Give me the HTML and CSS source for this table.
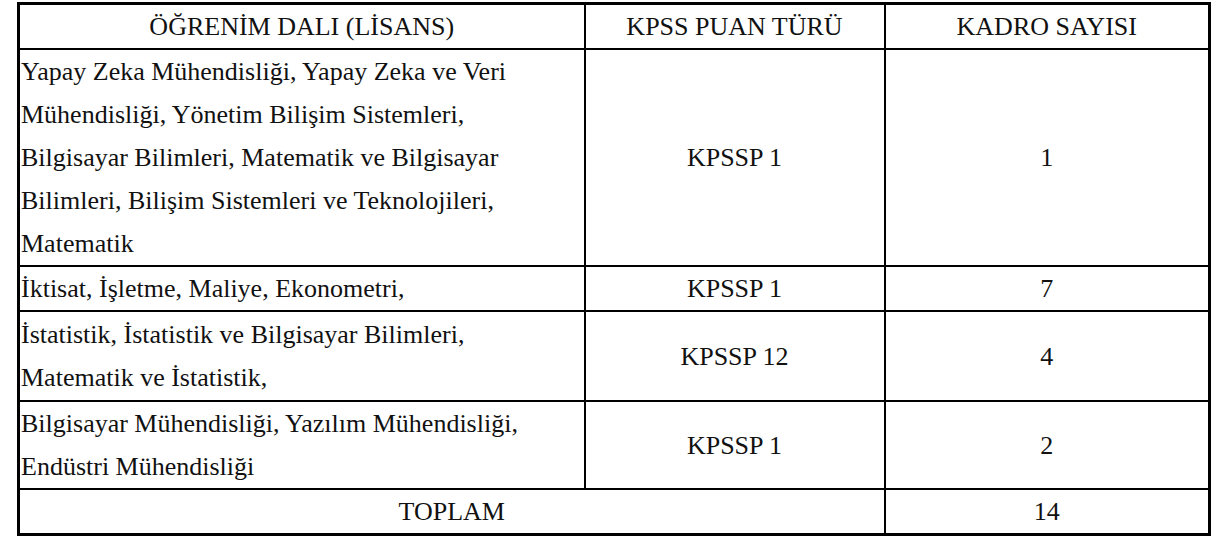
FILE: index.html
```html
<!DOCTYPE html>
<html>
<head>
<meta charset="utf-8">
<title>test</title>
<link rel="stylesheet" href="styles.css">
</head>
<body>
<table class="kadro">
  <colgroup>
    <col class="c1">
    <col class="c2">
    <col class="c3">
  </colgroup>
  <tr>
    <th class="cell">ÖĞRENİM DALI (LİSANS)</th>
    <th class="cell">KPSS PUAN TÜRÜ</th>
    <th class="cell">KADRO SAYISI</th>
  </tr>
  <tr>
    <td class="cell left">Yapay Zeka Mühendisliği, Yapay Zeka ve Veri<br>Mühendisliği, Yönetim Bilişim Sistemleri,<br>Bilgisayar Bilimleri, Matematik ve Bilgisayar<br>Bilimleri, Bilişim Sistemleri ve Teknolojileri,<br>Matematik</td>
    <td class="cell">KPSSP 1</td>
    <td class="cell">1</td>
  </tr>
  <tr>
    <td class="cell left">İktisat, İşletme, Maliye, Ekonometri,</td>
    <td class="cell">KPSSP 1</td>
    <td class="cell">7</td>
  </tr>
  <tr class="tall">
    <td class="cell left">İstatistik, İstatistik ve Bilgisayar Bilimleri,<br>Matematik ve İstatistik,</td>
    <td class="cell">KPSSP 12</td>
    <td class="cell">4</td>
  </tr>
  <tr>
    <td class="cell left">Bilgisayar Mühendisliği, Yazılım Mühendisliği,<br>Endüstri Mühendisliği</td>
    <td class="cell">KPSSP 1</td>
    <td class="cell">2</td>
  </tr>
  <tr>
    <td class="cell" colspan="2">TOPLAM</td>
    <td class="cell">14</td>
  </tr>
</table>
</body>
</html>
```
FILE: styles.css
```css
body { margin: 2px 0 0 17px; font-size: 26px; }
.kadro { border-collapse: collapse; table-layout: fixed; width: 1191px; border: 3px solid #000; font-size: 26px; }
.c1 { width: 566px; }
.c2 { width: 300px; }
.c3 { width: 325px; }
.cell { font-family: "Liberation Serif", "Tinos", "Times New Roman", "Nimbus Roman", "FreeSerif", serif; font-size: 26px; line-height: 43px; border: 2px solid #000; padding: 0 1px; text-align: center; vertical-align: middle; font-weight: normal; white-space: nowrap; color: #111; }
.kadro .left { text-align: left; }
.tall .cell { padding-top: 1px; padding-bottom: 1px; }
```
